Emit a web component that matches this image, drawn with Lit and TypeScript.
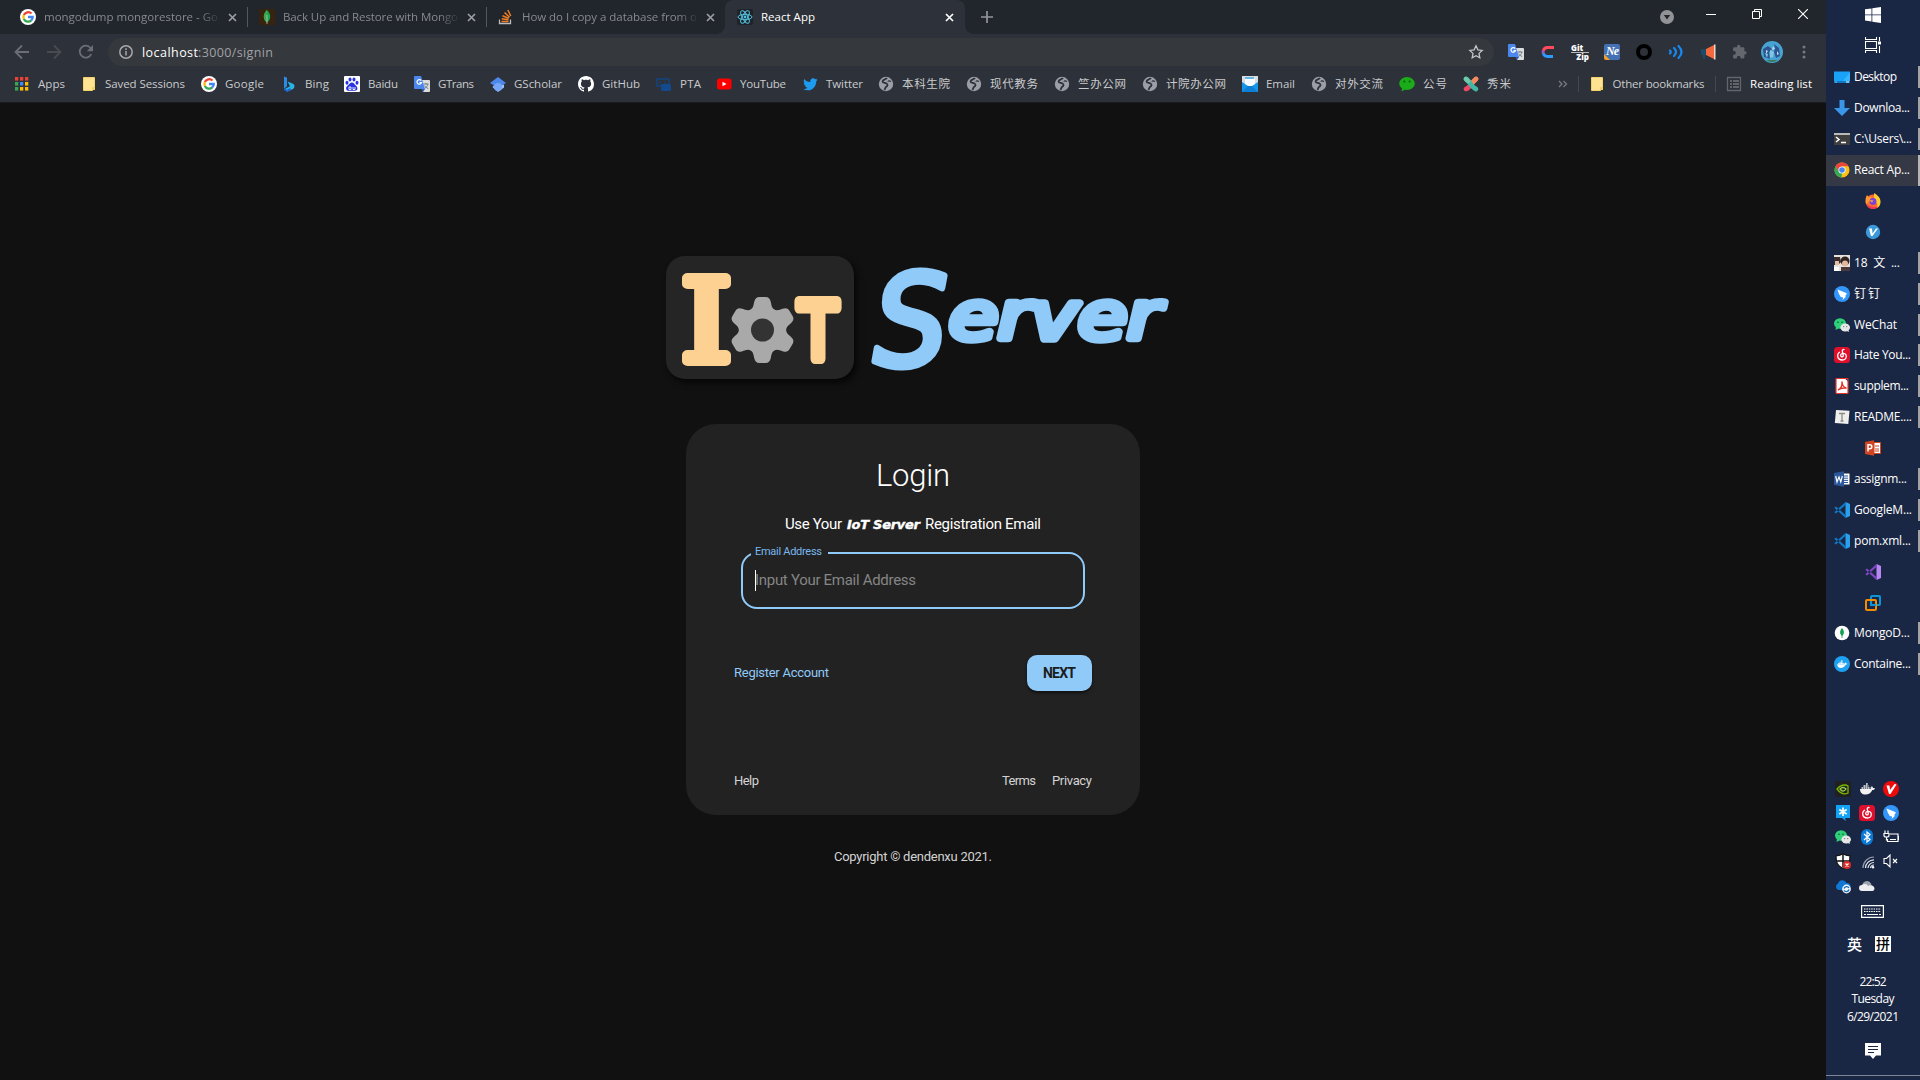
import { LitElement, html, svg, css, nothing } from "lit";
import { customElement, property } from "lit/decorators.js";

const icon = (body: unknown, w = 16, h = w, vb = `0 0 ${w} ${h}`) =>
  html`<svg class="ic" width=${w} height=${h} viewBox=${vb}>${body}</svg>`;

const gMark = svg`<circle cx="8" cy="8" r="8" fill="#fff"/><g fill="none" stroke-width="2.3"><path d="M3.8 6a4.8 4.8 0 0 1 7.7-1.5" stroke="#ea4335"/><path d="M3.9 10.1a4.8 4.8 0 0 1 0-4.2" stroke="#fbbc05"/><path d="M11.3 11.4A4.8 4.8 0 0 1 3.8 10" stroke="#34a853"/><path d="M8 8h4.7a4.8 4.8 0 0 1-1.5 3.5" stroke="#4285f4"/></g>`;
const translate = svg`<path d="M7 4h8a1 1 0 0 1 1 1v10a1 1 0 0 1-1 1H9z" fill="#dcdcdc"/><path d="M9.5 8h5M12 7v1M14 8c-.5 2-2 3.500-3.500 4.500M10.700 9.500c.8 1.500 2 2.500 3.500 3" stroke="#6b7c8c" fill="none"/><path d="M1 0h6l4 13H1a1 1 0 0 1-1-1V1a1 1 0 0 1 1-1z" fill="#4c87ee"/><path d="M8 13h3l-2 3z" fill="#2a56c6"/><path d="M7.200 4.600A2.300 2.300 0 1 0 7.500 6.600H5.500" stroke="#fff" stroke-width="1.200" fill="none"/>`;
const folder = svg`<path d="M2.500 1.500h11v11l-2 2h-9z" fill="#ffe391" stroke="#f2d06b"/><path d="M11 11h3v3h-3z" fill="#f2cf61"/>`;
const globe = svg`<circle cx="8" cy="8" r="7.200" fill="#9b9ea6"/><path d="M9 2c-1 1.500-4.500 1.500-4.500 3.500 0 1.500 2.500 1.200 4 2 1.800 1 1 2.500-.3 3.300-1 .7-1 2-1.700 3.200" stroke="#2d3139" stroke-width="1.700" fill="none"/><path d="M13 5.500c-1.500-.8-2.800-.6-3.300 0" stroke="#2d3139" stroke-width="1.100" fill="none"/>`;
const wechat = svg`<ellipse cx="6" cy="6.500" rx="6" ry="5.200" fill="#2fd07a"/><path d="M2 10l-.5 3 3-1.500z" fill="#2fd07a"/><circle cx="4" cy="5.200" r=".8" fill="#14532d"/><circle cx="8" cy="5.200" r=".8" fill="#14532d"/><ellipse cx="11.200" cy="10.500" rx="4.800" ry="4" fill="#e6e6e6"/><path d="M13 14l2 1-.5-2z" fill="#e6e6e6"/><circle cx="9.700" cy="9.600" r=".6" fill="#666"/><circle cx="12.700" cy="9.600" r=".6" fill="#666"/>`;
const netease = svg`<rect width="16" height="16" rx="3.500" fill="#e0102d"/><path d="M10.500 2.800c-1.500-.8-2.500.3-2.200 1.500l1 4.200c.2 1.800-2.600 1.800-2.600 0 0-1.500 1.300-2.300 2.800-2.200 4 .3 3.700 6.700-1.200 6.700-5.200 0-6-6-2.300-8" fill="none" stroke="#fff" stroke-width="1.300"/>`;
const ding = svg`<circle cx="8" cy="8" r="8" fill="#3296fa"/><path d="M3.500 3.500l8.800 3.500c.7.300.4 1-.1 1.800L10.800 10.500h1.500L8.500 14l.7-2.600-2.500-.4-.7-1.400-1-1.300z" fill="#fff"/>`;
const leaf = svg`<path d="M8 1c-5 5-3.500 10 0 12.500C11.500 11 13 6 8 1z" fill="#13aa52"/><path d="M8 1c-5 5-3.500 10 0 12.500z" fill="#46a34a"/><path d="M8 6v9" stroke="#b8c4b8" stroke-width=".8"/>`;
const whale = (c: string) => svg`<path d="M1 8h11c.2-1.500 0-2 .8-3 .8.600 1.200 1.200 1.200 2 .8 0 1.500 0 2 .4-.6 1-1.500 1.500-2.700 1.500C12 12 9.500 13.500 6.500 13.500 3 13.500 1 11.500 1 8z" fill=${c}/><path d="M2.500 7h9M4.500 5h5M7 3h2" stroke=${c} stroke-width="1.600" stroke-dasharray="1.700 .4"/>`;
const vscode = (a: string, b: string) => svg`<path d="M11.500 0L16 2v12l-4.500 2z" fill=${b}/><path d="M12 2.500L2 11.500.3 10.200 11.500 0zM12 13.500L2 4.500.3 5.800 11.500 16z" fill=${a}/>`;

const marks: Record<string, unknown> = {
  apps: svg`${["#ea4335", "#ea4335", "#ea4335", "#34a853", "#4285f4", "#fbbc05", "#34a853", "#fbbc05", "#fbbc05"].map(
    (c, i) => svg`<rect x=${1 + (i % 3) * 5} y=${1 + Math.floor(i / 3) * 5} width="3.300" height="3.600" fill=${c}/>`)}`,
  folder, g: gMark, globe, translate,
  bing: svg`<path d="M3 .5l3 1.200v8.500L3 13z" fill="#2b8be8"/><path d="M6.500 5.500l5.500 2.200c2 1 2 3.800 0 5.200L6.300 15.700 3 13.500l6-3.200z" fill="#27b4e6"/><path d="M3 12l3 2 3-2 1 1.800-4 2L3 14z" fill="#1b5fd0"/>`,
  baidu: svg`<rect width="16" height="16" rx="1" fill="#fff"/><g fill="#2932e1"><ellipse cx="3" cy="6.700" rx="1.500" ry="2"/><ellipse cx="6" cy="3.500" rx="1.500" ry="2.100"/><ellipse cx="10" cy="3.500" rx="1.500" ry="2.100"/><ellipse cx="13" cy="6.700" rx="1.500" ry="2"/><path d="M8 6.500c2 0 2.500 2 4 3.300 2.500 2 1.500 5-1 5-2 0-4-.3-6 0-3 .2-4-3-1.500-5C5 8.500 6 6.500 8 6.500z"/></g><path d="M5 11h2v2.500H5zM9 11v2.500h2V11" fill="none" stroke="#fff" stroke-width=".9"/>`,
  scholar: svg`<path d="M8 5l6 4v2.500L8 16l-5.500-5z" fill="#a0c3ff"/><path d="M8 1l8 6-8 5-8-5z" fill="#4d88ea"/><circle cx="8" cy="11" r="4" fill="#76a7fa"/>`,
  github: svg`<path fill="#fff" d="M8 0C3.580 0 0 3.580 0 8c0 3.540 2.290 6.530 5.470 7.590.4.070.55-.17.55-.38 0-.19-.01-.82-.01-1.490-2.010.37-2.530-.49-2.690-.94-.09-.23-.48-.94-.82-1.130-.28-.15-.68-.52-.01-.53.63-.01 1.080.58 1.230.82.72 1.210 1.870.87 2.330.66.07-.52.28-.87.51-1.070-1.780-.2-3.640-.89-3.640-3.950 0-.87.31-1.590.82-2.150-.08-.2-.36-1.020.08-2.120 0 0 .67-.21 2.200.82.640-.18 1.320-.27 2-.27s1.360.09 2 .27c1.530-1.040 2.200-.82 2.200-.82.440 1.100.16 1.920.08 2.120.51.560.82 1.270.82 2.150 0 3.070-1.870 3.750-3.650 3.950.29.250.54.730.54 1.480 0 1.070-.01 1.930-.01 2.200 0 .21.150.46.550.38A8.010 8.010 0 0 0 16 8c0-4.420-3.580-8-8-8z"/>`,
  pta: svg`<path d="M1 3h12v7H1z" fill="none" stroke="#134480" stroke-width="1.500"/><path d="M5 5L3.500 6.500 5 8M8 5l1.500 1.500L8 8" stroke="#134480" fill="none"/><rect x="5" y="8" width="10" height="7" rx="1.500" fill="#134a8e"/>`,
  yt: svg`<rect x="1" y="2.500" width="14.500" height="11" rx="2.500" fill="#f00"/><path d="M6.500 5.700v4.600L10.500 8z" fill="#fff"/>`,
  tw: svg`<path fill="#1d9bf0" d="M5.700 14.300c5.500 0 8.500-4.600 8.500-8.600v-.4c.6-.4 1.100-1 1.500-1.600-.5.300-1.100.4-1.700.5.600-.4 1.100-1 1.300-1.700-.6.400-1.200.6-1.900.7a3 3 0 0 0-5.100 2.800C5.800 5.900 3.600 4.700 2.200 2.900a3 3 0 0 0 .9 4c-.5 0-1-.1-1.400-.4a3 3 0 0 0 2.400 3c-.4.100-.9.100-1.300.1.400 1.200 1.500 2 2.800 2.100a6 6 0 0 1-4.400 1.200 8.500 8.500 0 0 0 4.500 1.400z"/>`,
  mail: svg`<rect width="16" height="16" fill="#d8dde2"/><path d="M0 6l8 5 8-5v10H0z" fill="#1596e8"/><path d="M3 2h10v6l-5 3-5-3z" fill="#f8fbff"/><path d="M3 1h9v2H3z" fill="#63b8e8"/><path d="M0 16l6-6h4l6 6z" fill="#0d7fd4"/>`,
  wxgreen: svg`<ellipse cx="8" cy="7.500" rx="7.800" ry="6.500" fill="#1aad19"/><path d="M3 12l-.5 3.500L7 13z" fill="#1aad19"/><circle cx="5.300" cy="5.500" r="1.100" fill="#0c5c10"/><circle cx="10.700" cy="5.500" r="1.100" fill="#0c5c10"/>`,
  xiumi: svg`<g stroke-width="4.600" stroke-linecap="round" fill="none"><path d="M3 13C6.500 12 9 6 13 3" stroke="#ef4866"/><path d="M9 7l4-4" stroke="#f38b62"/><path d="M3 3c3 1 5 8 10 10" stroke="#43b7a6"/><path d="M3 3l2 2" stroke="#6fc8a8"/></g>`,
};

const bookmarks: [string, string, number, number][] = [
  ["apps", "Apps", 67, 27], ["folder", "Saved Sessions", 120, 80], ["g", "Google", 80, 39], ["bing", "Bing", 63, 24],
  ["baidu", "Baidu", 70, 30], ["translate", "GTrans", 76, 36], ["scholar", "GScholar", 88, 48], ["github", "GitHub", 78, 38],
  ["pta", "PTA", 60, 21], ["yt", "YouTube", 86, 46], ["tw", "Twitter", 76, 37], ["globe", "本科生院", 88, 48],
  ["globe", "现代教务", 88, 48], ["globe", "竺办公网", 88, 48], ["globe", "计院办公网", 100, 60], ["mail", "Email", 69, 29],
  ["globe", "对外交流", 88, 48], ["wxgreen", "公号", 64, 24], ["xiumi", "秀米", 64, 24],
];

const cross = (c: string) => icon(svg`<path d="M1 1l7 7M8 1l-7 7" stroke=${c} stroke-width="1.700"/>`, 9);

const react = svg`<rect width="16" height="16" rx="2" fill="#20232a"/><g fill="none" stroke="#53c1de" stroke-width="1"><ellipse cx="8" cy="8" rx="7" ry="2.700"/><ellipse cx="8" cy="8" rx="7" ry="2.700" transform="rotate(60 8 8)"/><ellipse cx="8" cy="8" rx="7" ry="2.700" transform="rotate(120 8 8)"/></g><circle cx="8" cy="8" r="1.400" fill="#53c1de"/>`;
const tabs: [unknown, string, number][] = [
  [gMark, "mongodump mongorestore - Go", 174],
  [svg`<rect width="16" height="16" fill="#38230f"/>${leaf}`, "Back Up and Restore with Mongo", 175],
  [svg`<path d="M1.500 10.500v4h11v-4" fill="none" stroke="#b9bbbe" stroke-width="1.300"/><g stroke="#f48024" stroke-width="1.500"><path d="M3.500 12.500h7M3.700 9.800l6.800 1M4.500 6.800l6.300 2.600M6.500 3.500l5 4.800M9.800 1l3 6"/></g>`, "How do I copy a database from o", 175],
];

const extensions: unknown[] = [
  icon(translate),
  icon(svg`<path d="M14 3.500H7.500a4.500 4.500 0 0 0-4.300 3.500" stroke="#ff4a5e" stroke-width="2.800" fill="none"/><path d="M3.200 9A4.500 4.500 0 0 0 7.500 12.500H13" stroke="#2f9bff" stroke-width="2.800" fill="none"/><path d="M3.300 6.500a4 4 0 0 0 0 3" stroke="#9a5cc0" stroke-width="2.800" fill="none"/>`),
  html`<span class="gitzip"><i>Git</i><i class="zip">Zip</i></span>`,
  html`<span class="ne">Ne</span>`,
  icon(svg`<circle cx="8" cy="8" r="6" fill="none" stroke="#000" stroke-width="4"/>`),
  icon(svg`<g fill="none" stroke="#1688f0" stroke-width="2.200" stroke-linecap="round"><path d="M2 6.500q1.500 1.500 0 3M6 4q4 4 0 8M10.500 2q6 6 0 12"/></g>`),
  icon(svg`<path d="M1 5h5v6H5v4H3v-4H1z" fill="#1c4a6b"/><path d="M6 5l8-4v14l-8-4z" fill="#f4693b"/><path d="M14 .5h1.500v15H14z" fill="#e8d8cf"/>`),
  icon(svg`<path d="M13.300 7.300h-.9V4.600c0-.7-.6-1.300-1.300-1.300H8.400v-.9a1.700 1.700 0 0 0-3.400 0v.9H2.400c-.7 0-1.300.6-1.300 1.300v2.500H2a1.800 1.800 0 0 1 0 3.600h-.9v2.500c0 .8.600 1.300 1.300 1.300h2.500v-.9a1.800 1.800 0 0 1 3.600 0v.9h2.600c.7 0 1.300-.5 1.300-1.300v-2.600h.9a1.700 1.700 0 0 0 0-3.300z" fill="#64676d"/>`),
  icon(svg`<circle cx="11" cy="11" r="11" fill="#46a3d2"/><path d="M2 8l5-3 4 3-3 3 1 7-6-2zM13 3l5 4 1 8-4 2-2-6 1-4z" fill="#2f5590"/><path d="M9 9l4 2-1 5-3 1zM4 12l3 1-1 4z" fill="#81c7e4"/><path d="M5 19h12a11 11 0 0 1-12 0z" fill="#3b7a53"/><path d="M12 5l2 3-3 1zM5 9l2 1-2 3zM16 10l2 3-2 1z" fill="#bfdcf2"/>`, 22),
  icon(svg`<g fill="#777a80"><circle cx="8" cy="3" r="1.500"/><circle cx="8" cy="8" r="1.500"/><circle cx="8" cy="13" r="1.500"/></g>`),
];

type Task = { icon: unknown; label?: string; w?: number; active?: boolean };
const tasks: Task[] = [
  { label: "Desktop", w: 43, icon: svg`<rect y="2.500" width="16" height="11.500" fill="#18a2f8"/><path d="M0 12h16v2H0z" fill="#0b79c4"/><path d="M1.500 13h1M12 13h3" stroke="#fff"/><path d="M9 12L16 3v9z" fill="#36b4ff"/>` },
  { label: "Downloa...", w: 56, icon: svg`<path d="M5.500 0h5v8H16l-8 8-8-8h5.500z" fill="#3a96e8"/>` },
  { label: "C:\\Users\\...", w: 58, icon: svg`<rect y="2" width="16" height="12" fill="#3f3f3f"/><path d="M0 2h16v2H0z" fill="#b9b9b9"/><path d="M2 6l3 2.500L2 11M7 11.500h5" fill="none" stroke="#fff" stroke-width="1.500"/>` },
  { label: "React Ap...", w: 56, active: true, icon: svg`<circle cx="8" cy="8" r="7.500" fill="#fbc116"/><path d="M1.500 4.300A7.500 7.500 0 0 1 14.500 4.300H8L4.800 10z" fill="#e8453c"/><path d="M1.500 4.300L4.900 10 8 11.500 7.500 15.500A7.500 7.500 0 0 1 1.500 4.300z" fill="#31a853"/><circle cx="8" cy="8" r="3.600" fill="#fff"/><circle cx="8" cy="8" r="2.800" fill="#4285f4"/>` },
  { icon: svg`<circle cx="8" cy="8.800" r="7.200" fill="#ff6a30"/><path d="M9 0c3 2 6.500 4 6.500 9 0 3-1.500 5-3.500 6 1-5-1-6-3-9z" fill="#ffcb2e"/><path d="M2 2l2 2.500 3-.5L5 8l-4 3C0 8 .5 4.500 2 2z" fill="#ff9a2e"/><circle cx="8" cy="8.500" r="3.400" fill="#7a42d8"/><path d="M4 7l4.500.5-1.500 2z" fill="#ffa63c"/><path d="M1.200 11c2 5.500 8.500 6.500 12 2.500-5 1.500-9 0-12-2.500z" fill="#f5345c"/>` },
  { icon: svg`<circle cx="8" cy="8" r="7.200" fill="#3a9ad9"/><path d="M4 4.500h3l.5 5L11 4.500h2L7.500 12H6z" fill="#fff"/>` },
  { label: "18  文  ...", w: 46, icon: svg`<rect width="16" height="16" fill="#e9e2dc"/><path d="M0 2h6l1 5-3 3H0z" fill="#3a2c2c"/><circle cx="11" cy="6" r="4.500" fill="#2f2421"/><circle cx="11" cy="8.500" r="3" fill="#e5b99e"/><path d="M7 12h9v4H7z" fill="#4a3b3a"/><path d="M1 6h4v4H1z" fill="#e3bda6"/><path d="M0 12h5v4H0z" fill="#fff"/>` },
  { label: "钉钉", w: 26, icon: ding },
  { label: "WeChat", w: 43, icon: wechat },
  { label: "Hate You...", w: 57, icon: netease },
  { label: "supplem...", w: 55, icon: svg`<path d="M2 .5h9l3 3v12H2z" fill="#fff"/><rect x="2" y=".5" width="12" height="15" rx="1" fill="none" stroke="#e5352b" stroke-width="1.200"/><path d="M4 12c3-1 4.500-5 4-8.500 0 3 2 6 4.500 6.800-3-.6-6 0-8.500 1.700z" fill="none" stroke="#e5352b" stroke-width="1.500"/>` },
  { label: "README....", w: 58, icon: svg`<path d="M2 1l13.500.8L14.300 15 .8 14z" fill="#efefec"/><path d="M5 4.500h6M8 4.500v7.500M6.500 12h3" stroke="#8a8a8a" stroke-width="1.300"/>` },
  { icon: svg`<path d="M0 2l9-1.700v15.400L0 14z" fill="#d04423"/><path d="M9 2.500h6.500v11H9z" fill="#fff" stroke="#d04423"/><path d="M10 6h4M10 9h4M10 11h4" stroke="#d04423"/><path d="M3 11.500V4.700h1.800a1.900 1.900 0 0 1 0 4H3.500" fill="none" stroke="#fff" stroke-width="1.500"/>` },
  { label: "assignm...", w: 53, icon: svg`<path d="M0 2l10-1.700v15.400L0 14z" fill="#2b579a"/><path d="M10 2.500h5.500v11H10z" fill="#fff"/><path d="M10 5h4M10 7.200h4M10 9.400h4M10 11.500h4" stroke="#2b579a"/><path d="M1.700 5l1.300 6L5 6l1.800 5L8.300 5" fill="none" stroke="#fff" stroke-width="1.200"/>` },
  { label: "GoogleM...", w: 58, icon: vscode("#1279c4", "#2ba1ee") },
  { label: "pom.xml...", w: 57, icon: vscode("#1279c4", "#2ba1ee") },
  { icon: vscode("#8046c4", "#b888f2") },
  { icon: svg`<rect x="6" y="1" width="9" height="9" rx="1" fill="none" stroke="#0c95d6" stroke-width="2"/><rect x="1" y="5" width="10" height="10" rx="1" fill="none" stroke="#f38b00" stroke-width="2"/><path d="M6 6V10h5" fill="none" stroke="#0c95d6" stroke-width="1.800"/>` },
  { label: "MongoD...", w: 56, icon: svg`<circle cx="8" cy="8" r="7.300" fill="#fff"/><path d="M8 3c-3 3.500-2 6.500 0 8 2-1.500 3-4.500 0-8z" fill="#12a150"/><path d="M8 8v5" stroke="#12a150" stroke-width=".8"/>` },
  { label: "Containe...", w: 57, icon: svg`<circle cx="8" cy="8" r="8" fill="#1da1f2"/><g transform="translate(2.500 2.800) scale(.68)">${whale("#fff")}</g>` },
];

const tray: unknown[] = [
  svg`<rect width="16" height="16" fill="#202020"/><path d="M2 8c3-4 8-5 11-3v7c-4 2-8 0-11-4z" fill="none" stroke="#76b900" stroke-width="1.300"/><path d="M5 8c2-2 4-2 6 0-2 3-4 2.500-6 0z" fill="none" stroke="#9ad04a" stroke-width="1.300"/>`,
  whale("#f2f2f2"),
  svg`<circle cx="8" cy="8" r="8" fill="#ee0a0a"/><path d="M3.500 4.500h3l.5 4.500L11.500 3l2 .5L7.500 13H6z" fill="#fff"/>`,
  svg`<path d="M1 0h14v13h-5l1 3-4-3H1z" fill="#12a3f5"/><path d="M8 2.500v8.500M4.300 4.600l7.400 4.300M11.700 4.600L4.300 8.900" stroke="#fff" stroke-width="1.700"/>`,
  netease, ding, wechat,
  svg`<rect x="2" width="12" height="16" rx="6" fill="#0a78d6"/><path d="M5 5l6 5.500L8 13V3l3 2.500L5 11" fill="none" stroke="#fff" stroke-width="1.200"/>`,
  svg`<path d="M2 1.500v3M5 1.500v3M1 4.500h5v2q0 1.500-2.500 1.500T1 6.500zM3.500 8v3H5M7 5h8v7.500H4.500V10M15 7.500h1v3h-1" fill="none" stroke="#fff" stroke-width="1.200"/><path d="M7 10.500h6" stroke="#fff"/>`,
  svg`<path d="M8 .8c2 1.500 4.500 2 7 2 0 6.200-1 10.200-7 12.400C2 13 1 9 1 2.800c2.500 0 5-.5 7-2z" fill="#fff" stroke="#111" stroke-width="1.200"/><path d="M8 1v13M1.500 8h13" stroke="#111" stroke-width="1.500"/><circle cx="12" cy="12" r="4" fill="#d92a2a"/><path d="M10.500 10.500l3 3M13.500 10.500l-3 3" stroke="#fff" stroke-width="1.200"/>`,
  svg`<g fill="none" stroke="#e6e9ef" stroke-width="1.200"><path d="M4 15A11 11 0 0 1 15 4" opacity=".6"/><path d="M6.500 15A8.500 8.500 0 0 1 15 6.800"/><path d="M9 15a6 6 0 0 1 6-5.500"/><path d="M11.500 15a3.500 3.500 0 0 1 3.500-3"/></g><circle cx="14" cy="14.200" r="1.200" fill="#fff"/>`,
  svg`<path d="M1 5.500h2.500L7 2v12l-3.500-3.500H1z" fill="none" stroke="#fff" stroke-width="1.100"/><path d="M10 6l4 4M14 6l-4 4" stroke="#fff" stroke-width="1.200"/>`,
  svg`<path d="M3.500 12a3.500 3.500 0 0 1-.5-6.500 4.500 4.500 0 0 1 8.500-.5 3.500 3.500 0 0 1 1 7z" fill="#0f78d4"/><circle cx="11.500" cy="11" r="4.400" fill="#eef5fb"/><path d="M9 10.500a2.700 2.700 0 0 1 5-.5M14 11.500a2.700 2.700 0 0 1-5 .7" stroke="#1b6fb8" fill="none" stroke-width="1.300"/>`,
  svg`<path d="M3.500 8a4.500 4.500 0 0 1 8.500-2.500L13 9z" fill="#9da3ad"/><path d="M3 13a3 3 0 0 1 0-6 4 4 0 0 1 6 1c3-2 6.500 0 6.500 2.500A2.500 2.500 0 0 1 13.500 13z" fill="#eceef1"/>`,
];

/* A single line of text tracked so that it spans the given width. */
@customElement("fit-text")
class FitText extends LitElement {
  @property() text = "";
  @property({ type: Number }) width = 0;
  static styles = css`
    :host { display: inline-block; white-space: pre; flex: none; }
  `;
  updated() {
    const span = this.renderRoot.querySelector("span")!;
    span.style.letterSpacing = "0";
    const natural = span.getBoundingClientRect().width;
    const n = Math.max(1, [...this.text].length - 1);
    span.style.letterSpacing = `${(this.width - natural) / n}px`;
    this.style.width = `${this.width}px`;
  }
  render() {
    return html`<span>${this.text}</span>`;
  }
}

const fit = (text: string, width: number) => html`<fit-text .text=${text} .width=${width}></fit-text>`;

@customElement("browser-chrome")
class BrowserChrome extends LitElement {
  static styles = css`
    :host { display: block; font: 11.500px/16px "Open Sans", "Noto Sans CJK SC", sans-serif; color: #c9cbcd; }
    svg { display: block; flex: none; }
    .strip { height: 34px; background: #21252c; display: flex; align-items: center; }
    .tab { width: 239px; box-sizing: border-box; padding-left: 20px; display: flex; align-items: center; height: 34px; color: #878a8f; flex: none; }
    .tab .ttl { width: 176px; margin: 0 8px 0 8px; white-space: nowrap; flex: none;
      -webkit-mask-image: linear-gradient(90deg, #000 155px, transparent 178px); mask-image: linear-gradient(90deg, #000 155px, transparent 178px); }
    .tab .sep { width: 1px; height: 20px; background: #54575c; margin: 0 -9px 0 10px; flex: none; }
    .tab.last .sep { background: transparent; }
    .on { width: 240px; height: 34px; margin-left: 8px; background: #2d3139; border-radius: 8px 8px 0 0; box-sizing: border-box; flex: none;
      padding: 0 11px 0 12px; display: flex; align-items: center; gap: 8px; color: #fff; position: relative; }
    .on::before, .on::after { content: ""; position: absolute; bottom: 0; width: 8px; height: 8px; }
    .on::before { left: -8px; background: radial-gradient(circle at 0 0, transparent 7.500px, #2d3139 8px); }
    .on::after { right: -8px; background: radial-gradient(circle at 100% 0, transparent 7.500px, #2d3139 8px); }
    .grow { flex: 1; }
    .plus { margin-left: 16px; }
    .win { display: flex; align-items: center; height: 28px; align-self: flex-start; }
    .win > * { width: 46px; display: flex; justify-content: center; }
    .drop { margin-right: 14px; }
    .bar { height: 36px; background: #2d3139; display: flex; align-items: center; box-sizing: border-box; padding-right: 6px; }
    .nav { width: 32px; display: flex; justify-content: center; }
    .nav:first-child { margin-left: 6px; }
    .pill { width: 1386px; height: 28px; border-radius: 14px; background: #35383c; margin-left: 6px; box-sizing: border-box;
      padding: 0 10px 0 11px; display: flex; align-items: center; font-size: 12.500px; color: #a0a3a7; }
    .pill .host { margin-left: 9px; color: #fff; }
    .pill .host, .pill .path { padding-top: 1px; }
    .ext { width: 32px; display: flex; justify-content: center; }
    .exts { display: flex; margin-left: 6px; align-items: center; }
    .gitzip { font: 800 8px/7px "Open Sans", sans-serif; color: #fff; width: 18px; display: flex; flex-direction: column; }
    .gitzip i { font-style: normal; border-bottom: 1px solid #bbb; padding-bottom: 1px; }
    .gitzip .zip { border: 0; text-align: right; }
    .ne { width: 16px; height: 16px; border-radius: 2px; color: #fff; font: italic 700 12px/15px "Liberation Serif", serif; text-align: center;
      background: linear-gradient(45deg, #f0a030 4px, #4470b4 4.500px); letter-spacing: -1px; }
    .marks { height: 33px; background: #2d3139; border-bottom: 1px solid #1a1b1e; display: flex; align-items: center; box-sizing: border-box; padding: 0 14px 5px; }
    .mark { display: flex; align-items: center; gap: 8px; flex: none; }
    .more { width: 10px; margin-left: 31px; }
    .div { width: 1px; height: 16px; background: #44484f; }
    .other { margin: 0 10px 0 10px; }
    .read { margin-left: 1px; color: #fff; }
  `;
  render() {
    return html`
      <div class="strip">
        ${tabs.map(([ic, t, w], i) => html`
          <div class="tab ${i === 2 ? "last" : ""}">${icon(ic)}<span class="ttl">${fit(t, w)}</span>${cross("#9b9ea3")}<span class="sep"></span></div>`)}
        <div class="on">${icon(react)}${fit("React App", 54)}<span class="grow"></span>${cross("#fff")}</div>
        <span class="plus">${icon(svg`<path d="M6 0v12M0 6h12" stroke="#93959a" stroke-width="1.700"/>`, 12)}</span>
        <span class="grow"></span>
        <span class="drop">${icon(svg`<circle cx="7" cy="7" r="7" fill="#919397"/><path d="M3.800 5h6.400L7 9.500z" fill="#21252c"/>`, 14)}</span>
        <div class="win">
          <span>${icon(svg`<path d="M0 5.500h10" stroke="#fff"/>`, 10)}</span>
          <span>${icon(svg`<path d="M.5 2.500h7v7h-7zM2.500 2V.5h7v7H8" fill="none" stroke="#fff"/>`, 10)}</span>
          <span>${icon(svg`<path d="M0 0l10 10M10 0L0 10" stroke="#fff" stroke-width="1.100"/>`, 10)}</span>
        </div>
      </div>
      <div class="bar">
        <span class="nav">${icon(svg`<path d="M15 8H2M8 1.500L1.500 8 8 14.500" fill="none" stroke="#6b6e74" stroke-width="1.800"/>`)}</span>
        <span class="nav">${icon(svg`<path d="M1 8h13M8 1.500L14.500 8 8 14.500" fill="none" stroke="#484b51" stroke-width="1.800"/>`)}</span>
        <span class="nav">${icon(svg`<path d="M13.300 10A6 6 0 1 1 12.500 4" fill="none" stroke="#6b6e74" stroke-width="1.800"/><path d="M15 1v6.200H8.800z" fill="#6b6e74"/>`)}</span>
        <div class="pill">
          ${icon(svg`<circle cx="7" cy="7" r="6.200" fill="none" stroke="#a7a9ac" stroke-width="1.500"/><path d="M7 6v4.500M7 3.300v1.600" stroke="#a7a9ac" stroke-width="1.500"/>`, 14)}
          <span class="host">${fit("localhost", 56)}</span><span class="path">${fit(":3000/signin", 75)}</span>
          <span class="grow"></span>
          ${icon(svg`<path d="M8 1.800l1.900 4 4.300.6-3.200 3 .8 4.400L8 11.700l-3.800 2.100.8-4.400-3.200-3 4.300-.6z" fill="none" stroke="#c3c5c8" stroke-width="1.300"/>`)}
        </div>
        <div class="exts">${extensions.map((e) => html`<span class="ext">${e}</span>`)}</div>
      </div>
      <div class="marks">
        ${bookmarks.map(([ic, t, w, tw]) => html`<div class="mark" style="width:${w}px">${icon(marks[ic])}${fit(t, tw)}</div>`)}
        <span class="more">${icon(svg`<path d="M1 1l3 3-3 3M5.500 1l3 3-3 3" fill="none" stroke="#777a80" stroke-width="1.300"/>`, 10, 8)}</span>
        <span class="div other"></span>
        <div class="mark">${icon(folder)}${fit("Other bookmarks", 92)}</div>
        <span class="div other"></span>
        <div class="mark read">${icon(svg`<path d="M1.500 1.500h13v13h-13z" fill="none" stroke="#62656b" stroke-width="1.300"/><path d="M4 5h2M7 5h6M4 8h2M7 8h6M4 11h2M7 11h6" stroke="#73767b" stroke-width="1.500"/>`)}${fit("Reading list", 62)}</div>
      </div>`;
  }
}

const gear = () => {
  const teeth = [0, 60, 120, 180, 240, 300];
  return svg`<g transform="translate(96.500 74)">
    <g fill="#a9a9a9">${teeth.map((a) => svg`<path transform="rotate(${a})" d="M-12.500 -20C-9 -22 -9 -25 -8.300 -28C-7.500 -31.500 -6 -33 -3 -33H3C6 -33 7.500 -31.500 8.300 -28C9 -25 9 -22 12.500 -20V0H-12.500z"/>`)}
    <circle r="23"/></g><circle r="11.500" fill="#333"/></g>`;
};

@customElement("login-page")
class LoginPage extends LitElement {
  static styles = css`
    :host { display: flex; flex-direction: column; align-items: center; background: #111; flex: 1; font-family: Roboto, sans-serif; color: #fff; }
    svg { display: block; overflow: visible; }
    .brand { display: flex; margin: 153px 0 0 9px; height: 123px; width: 503px; }
    .badge { width: 188px; height: 123px; background: #252525; border-radius: 19px; box-shadow: 3px 4px 6px #000a; flex: none; }
    .word { margin-left: 14px; }
    .card { margin-top: 45px; width: 454px; height: 391px; box-sizing: border-box; border-radius: 30px; background: #222; padding: 30px 48px 0;
      display: flex; flex-direction: column; align-items: center; }
    .title { font-weight: 300; font-size: 31px; line-height: 44px; }
    .sub { display: flex; margin-top: 16px; align-items: baseline; gap: 5px; font-size: 15px; line-height: 20px; }
    .script { font: italic 700 13px/20px "DejaVu Sans", sans-serif; -webkit-text-stroke: .4px #fff; }
    .field { width: 344px; height: 57px; margin: 17px 0 0; border: 2px solid #90caf9; border-radius: 16px; box-sizing: border-box; position: relative;
      padding: 0 12px 1px; display: flex; align-items: center; font-size: 15px; color: #858585; }
    .legend { position: absolute; left: 8px; top: -10px; padding: 0 6px 0 4px; height: 16px; background: #222; color: #79b8ee; font-size: 11px; line-height: 16px; }
    .caret { width: 1px; height: 21px; background: #fff; margin-right: -1px; }
    .row { display: flex; align-items: center; align-self: stretch; font-size: 13px; line-height: 18px; color: #d3d3d3; }
    .actions { margin-top: 46px; height: 36px; color: #90caf9; justify-content: space-between; }
    .next { width: 65px; height: 36px; border-radius: 10px; background: #90caf9; color: #1b1d20; font-weight: 700; font-size: 14px; display: flex;
      align-items: center; justify-content: center; box-shadow: 0 2px 3px #0008; }
    .foot { margin-top: 81px; }
    .foot .grow { flex: 1; }
    .foot .priv { margin-left: 16px; }
    .copy { margin-top: 33px; font-size: 13px; line-height: 18px; color: #d3d3d3; }
  `;
  render() {
    return html`
      <div class="brand">
        <svg class="badge" viewBox="0 0 188 123">
          <g fill="#fcd191" stroke="#fcd191" stroke-linejoin="round" text-anchor="middle">
            <text x="40.600" y="104.500" font-family="DejaVu Serif" font-size="114" stroke-width="10" textLength="52" lengthAdjust="spacingAndGlyphs">I</text>
            <text x="152" y="102.500" font-family="DejaVu Sans" font-size="78" stroke-width="11" textLength="38" lengthAdjust="spacingAndGlyphs">T</text>
          </g>
          ${gear()}
        </svg>
        <svg class="word" width="300" height="123" viewBox="868 256 300 123">
          <g fill="#90caf9" stroke="#90caf9" stroke-linejoin="round" stroke-linecap="round" font-family="DejaVu Sans" font-style="italic">
            <text x="874" y="365" font-size="126" stroke-width="7" textLength="74" lengthAdjust="spacingAndGlyphs">S</text>
            <text x="949" y="339" font-size="65" stroke-width="7.500" textLength="211" lengthAdjust="spacingAndGlyphs">erver</text>
          </g>
        </svg>
      </div>
      <div class="card">
        <div class="title">${fit("Login", 74)}</div>
        <div class="sub">${fit("Use Your", 57)}<span class="script">${fit("IoT Server", 73)}</span>${fit("Registration Email", 116)}</div>
        <div class="field">
          <span class="legend">${fit("Email Address", 67)}</span>
          <span class="caret"></span>${fit("Input Your Email Address", 161)}
        </div>
        <div class="row actions">${fit("Register Account", 95)}<span class="next">${fit("NEXT", 33)}</span></div>
        <div class="row foot">${fit("Help", 25)}<span class="grow"></span>${fit("Terms", 34)}<span class="priv">${fit("Privacy", 40)}</span></div>
      </div>
      <div class="copy">${fit("Copyright © dendenxu 2021.", 158)}</div>`;
  }
}

@customElement("task-bar")
class TaskBar extends LitElement {
  static styles = css`
    :host { display: flex; flex-direction: column; width: 94px; box-sizing: border-box; background: #1a2744; color: #fff; flex: none;
      font: 12px/16px "Open Sans", "Noto Sans CJK SC", sans-serif; }
    svg { display: block; flex: none; }
    .top { height: 62px; box-sizing: border-box; padding-top: 7px; display: flex; flex-direction: column; align-items: center; gap: 13.500px; }
    .task { height: 30.900px; display: flex; align-items: center; justify-content: center; flex: none; }
    .task.named { justify-content: flex-start; padding-left: 8px; gap: 4px; }
    .task.active { background: #353945; }
    .task i { margin-left: auto; width: 2px; height: 22px; background: #a3a3a3; flex: none; }
    .task.active i { height: 30.900px; background: #b5b5b5; }
    .tray { margin: 97px 0 0 5px; display: grid; grid-template-columns: repeat(3, 24px); grid-auto-rows: 24.200px; justify-items: center; align-items: center; justify-content: start; }
    .kb { margin: 7.500px 0 0 35px; }
    .ime { display: flex; align-items: center; margin: 17px 0 0 21px; gap: 13px; font: 500 15px/18px "Noto Sans CJK SC", sans-serif; height: 18px; }
    .ime .pin { width: 16px; height: 16px; background: #fff; color: #000; font-size: 14px; line-height: 15px; text-align: center; }
    .clock { margin-top: 19.500px; display: flex; flex-direction: column; align-items: center; line-height: 17.400px; }
    .note { margin: 18px auto 0; }
    .edge { margin-top: auto; height: 1px; background: #7f8797; margin-bottom: 4px; }
  `;
  render() {
    return html`
      <div class="top">
        ${icon(svg`<path d="M0 2.300l6.500-.9v6.100H0zM7.300 1.300L16 0v7.500H7.300zM0 8.300h6.500v6.200L0 13.600zM7.300 8.300H16V16l-8.700-1.300z" fill="#fff"/>`)}
        ${icon(svg`<path d="M.5 0v2.500h11V0M.5 16v-2.500h11V16M.5 4.500h11v7H.5zM14.500 0v4M14.500 9v7" fill="none" stroke="#fff" stroke-width="1.100"/><path d="M13 4.500h3v3h-3z" fill="#fff"/>`)}
      </div>
      ${tasks.map((t) => html`<div class="task ${t.label ? "named" : ""} ${t.active ? "active" : ""}">${icon(t.icon)}${t.label ? html`${fit(t.label, t.w!)}<i></i>` : nothing}</div>`)}
      <div class="tray">${tray.map((t) => icon(t))}</div>
      <div class="kb">${icon(svg`<path d="M.6.6h21.800v11.800H.6z" fill="none" stroke="#fff" stroke-width="1.200"/><path d="M3 4h17M3 6.500h17" stroke="#fff" stroke-dasharray="1.500 .9"/><path d="M3 9.500h2M6 9.500h11M18 9.500h2" stroke="#fff"/>`, 23, 13)}</div>
      <div class="ime"><span>英</span><span class="pin">拼</span></div>
      <div class="clock">${fit("22:52", 27)}${fit("Tuesday", 43)}${fit("6/29/2021", 52)}</div>
      <div class="note">${icon(svg`<path d="M0 0h16v12.500h-5L8 16l-3-3.500H0z" fill="#fff"/><path d="M3 3.500h10M3 6.500h10M3 9.500h6" stroke="#1a2744" stroke-width="1.100"/>`)}</div>
      <div class="edge"></div>`;
  }
}

@customElement("app-root")
class AppRoot extends LitElement {
  static styles = css`
    :host { display: flex; width: 1920px; height: 1080px; overflow: hidden; background: #111; }
    .window { width: 1826px; display: flex; flex-direction: column; flex: none; }
  `;
  render() {
    return html`<div class="window"><browser-chrome></browser-chrome><login-page></login-page></div><task-bar></task-bar>`;
  }
}
